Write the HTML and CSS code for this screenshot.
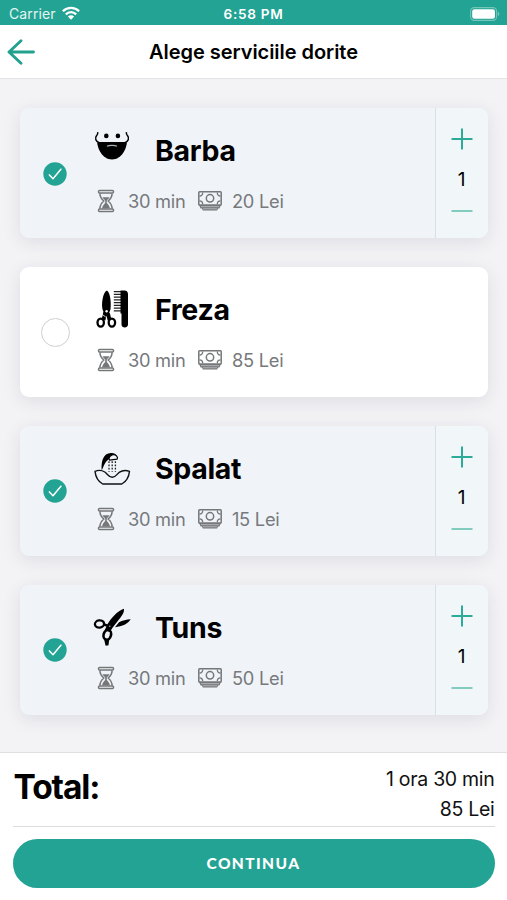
FILE: index.html
```html
<!DOCTYPE html>
<html lang="ro">
<head>
<meta charset="utf-8">
<title>Alege serviciile dorite</title>
<link rel="stylesheet" href="styles.css">
</head>
<body>
<svg class="sprite" width="0" height="0">
  <symbol id="hourglass" viewBox="0 0 18 24">
    <g fill="none" stroke="#757779" stroke-width="1.5" stroke-linejoin="round">
      <rect x="1.500" y="1.500" width="15" height="2.600" rx="1"/><rect x="1.500" y="19.900" width="15" height="2.600" rx="1"/>
      <path d="M2.900 4.200c0 4 1.200 5.500 4 7.800-2.800 2.300-4 3.800-4 7.800M15.100 4.200c0 4-1.200 5.500-4 7.800 2.800 2.300 4 3.800 4 7.800"/>
    </g>
    <path d="M5.500 8.300h7c-.7 1.300-1.900 2-2.700 3.200V14c1.200 1.300 2.800 2.700 3.200 5.500H5c.4-2.800 2-4.200 3.200-5.500v-2.500c-.8-1.200-2-1.900-2.700-3.200z" fill="#757779"/>
  </symbol>
  <symbol id="money" viewBox="0 0 24 20">
    <g fill="none" stroke="#757779">
      <rect x=".8" y=".8" width="22.400" height="13.200" rx=".8" stroke-width="1.500"/>
      <circle cx="12" cy="7.300" r="3.700" stroke-width="1.500"/>
      <path d="M1.500 5c2 0 3.200-1.300 3.200-3.500M22.500 5c-2 0-3.200-1.300-3.200-3.500M1.500 9.800c2 0 3.200 1.300 3.200 3.500M22.500 9.800c-2 0-3.200 1.300-3.200 3.500" stroke-width="1.300"/>
    </g>
    <path d="M1 14h22l-1.600 3.600H20L19.200 19.500H4.800L4 17.600H2.600z" fill="#757779"/>
    <path d="M3 15.700h18M5 17.800h14" stroke="#dfe2e6" stroke-width=".6"/>
  </symbol>
  <symbol id="beard" viewBox="0 0 40 40">
    <path d="M4.700 2.200c.3 1.600 0 2.600-1.200 3.600-1.900 2.200-.8 6.200 2.900 6.900h25.300c3.700-.7 4.800-4.700 2.900-6.900-1.200-1-1.500-2-1.200-3.600" fill="none" stroke="#000" stroke-width="1.500"/>
    <path d="M4.200 12.300h29.700c-.3 6-5 17.200-14.900 17.200S4.500 18.300 4.200 12.300z"/>
    <path d="M14 16.200c2-1.200 8-1.200 10 0" fill="none" stroke="#aeb2b6" stroke-width="1.200"/>
    <circle cx="13.300" cy="5.900" r="2.300"/><circle cx="24.900" cy="5.900" r="2.300"/>
  </symbol>
  <symbol id="comb" viewBox="0 0 40 40">
    <path d="M13.300 1.800h1c3 3 4 11 3.200 18.500l-2 5.500h-4l-2-5.500c-1.300-6 .5-16 3.800-18.500z"/>
    <path d="M12.200 23.500 10.500 31M15 24.500l1.500 6.500" stroke="#000" stroke-width="3.800"/>
    <circle cx="13.600" cy="22.300" r="1.200" fill="#fff"/>
    <path d="M8.500 25l4.300 3" stroke="#fff" stroke-width=".8"/>
    <g fill="#fff" stroke="#000" stroke-width="2.300"><ellipse cx="7.700" cy="33.600" rx="3.200" ry="4"/><ellipse cx="18.900" cy="33.600" rx="3.200" ry="4"/></g>
    <path d="M20.800 2.600h8M20.800 5.400h8M20.800 8.100h8M20.800 10.900h8M20.800 13.600h8M20.800 16.400h8M20.800 19.100h8M20.800 21.900h8" stroke="#222" stroke-width="1.200"/>
    <path d="M27.500 1.600h4c2.300 0 3.500 1.500 3.500 3.700v30.200c0 4-6.500 4-6.500 0v-11h-1z"/>
  </symbol>
  <symbol id="wash" viewBox="0 0 40 40">
    <path d="M8.700 22.500C8 14 9.800 5.200 18 5c3.500-.2 6 1.700 6.600 4.800l-8.800 1.400c-3.500 2-5 7-7.100 11.300z"/>
    <path d="M15.900 10.700c.8-3.500 5-5.500 7.800-2.600 1 1.200.8 2.500.4 3l-7.500.9z" fill="#f0f4f9" stroke="#000" stroke-width="1.200"/>
    <path d="M16 13.300v10.500M19.200 13.300v10.500M22.400 13.300v10.500" stroke="#222" stroke-width="1.300" stroke-dasharray="1.700 1.500"/>
    <path d="M2 23.300c3-1.200 7-1 9.800.7 3 2 3.700 5.200 7.500 5.200s4.500-3.200 7.300-5.100c2.600-1.700 6.500-2 9.900-.8-.6 5.400-3 10-7.700 12.700H9.700C5 33.300 2.600 28.700 2 23.300z" fill="none" stroke="#111" stroke-width="1.400" stroke-linejoin="round"/>
  </symbol>
  <symbol id="scissors" viewBox="0 0 40 40">
    <path d="M31 1.800c.3 3-1 5.500-3.300 8.500l-8 10.200-2.900 4.500-5-2 2.500-5.500c3.500-6 10-13.500 16.700-15.700z"/>
    <path d="M37.700 12.300c-2.500 4.500-8.500 7.200-15.700 7.900l4-5c3.500-1.500 7.500-2.800 11.700-2.900z"/>
    <path d="M11 17.500l5 1.600" stroke="#000" stroke-width="2.500"/>
    <ellipse cx="6.500" cy="17" rx="4.600" ry="3.600" transform="rotate(-8 6.500 17)" fill="none" stroke="#000" stroke-width="2.300"/>
    <ellipse cx="14.300" cy="27.800" rx="3.700" ry="5" transform="rotate(15 14.300 27.800)" fill="none" stroke="#000" stroke-width="2.600"/>
    <path d="M10.800 31.500c1 2.800 1 5 1.900 7.200l2.800-.5.600-5z"/>
    <circle cx="16.800" cy="19.300" r=".7" fill="#bbb"/>
  </symbol>
  <symbol id="check" viewBox="0 0 24 24">
    <circle cx="12" cy="12" r="11.700" fill="#23a393"/>
    <path d="M6.400 12.900l3.600 3.800 7.900-9.500" fill="none" stroke="#fff" stroke-width="1.500" stroke-linecap="round" stroke-linejoin="round"/>
  </symbol>
  <symbol id="plus" viewBox="0 0 22 22"><path d="M11 .5v21M.5 11h21" stroke="#2bab98" stroke-width="2"/></symbol>
  <symbol id="minus" viewBox="0 0 22 2"><path d="M.5 1h21" stroke="#83cbbf" stroke-width="2"/></symbol>
</svg>

<div class="screen">
  <div class="status">
    <div class="carrier"><span>Carrier</span>
      <svg width="18" height="14" viewBox="0 0 18 14"><g fill="none" stroke="#fff" stroke-width="2.300"><path d="M.9 5.200c4.600-4.500 11.600-4.500 16.200 0M3.800 8.300c3-2.900 7.400-2.900 10.400 0"/></g><path d="M5.900 10.600c1.800-1.700 4.400-1.700 6.200 0L9 13.700z" fill="#fff"/></svg>
    </div>
    <div class="time">6:58 PM</div>
    <svg class="battery" width="30" height="14" viewBox="0 0 30 14"><rect x=".6" y=".6" width="26" height="12.800" rx="3.600" fill="none" stroke="#74c5ba" stroke-width="1.100"/><rect x="2.200" y="2.200" width="22.800" height="9.600" rx="2.200" fill="#fff"/><path d="M27.800 4.600c2 .8 2 4 0 4.800z" fill="#74c5ba"/></svg>
  </div>
  <header class="nav">
    <svg class="back" width="28" height="26" viewBox="0 0 28 26"><path d="M14 1.700 2 13l12 11.300M2.500 13h24" fill="none" stroke="#23a08e" stroke-width="2.900" stroke-linecap="round" stroke-linejoin="round"/></svg>
    <h1>Alege serviciile dorite</h1>
  </header>

  <main class="list">
    <article class="card selected">
      <div class="mark"><svg width="24" height="24"><use href="#check"/></svg></div>
      <div class="info">
        <div class="head"><svg width="40" height="40"><use href="#beard"/></svg><h2>Barba</h2></div>
        <div class="meta"><svg class="hg" width="18" height="24"><use href="#hourglass"/></svg><span class="dur">30 min</span><svg width="24" height="20"><use href="#money"/></svg><span class="price">20 Lei</span></div>
      </div>
      <div class="qty"><svg width="22" height="22"><use href="#plus"/></svg><span>1</span><svg width="22" height="2"><use href="#minus"/></svg></div>
    </article>
    <article class="card">
      <div class="mark"><span class="ring"></span></div>
      <div class="info">
        <div class="head"><svg width="40" height="40"><use href="#comb"/></svg><h2>Freza</h2></div>
        <div class="meta"><svg class="hg" width="18" height="24"><use href="#hourglass"/></svg><span class="dur">30 min</span><svg width="24" height="20"><use href="#money"/></svg><span class="price">85 Lei</span></div>
      </div>
    </article>
    <article class="card selected">
      <div class="mark"><svg width="24" height="24"><use href="#check"/></svg></div>
      <div class="info">
        <div class="head"><svg width="40" height="40"><use href="#wash"/></svg><h2>Spalat</h2></div>
        <div class="meta"><svg class="hg" width="18" height="24"><use href="#hourglass"/></svg><span class="dur">30 min</span><svg width="24" height="20"><use href="#money"/></svg><span class="price">15 Lei</span></div>
      </div>
      <div class="qty"><svg width="22" height="22"><use href="#plus"/></svg><span>1</span><svg width="22" height="2"><use href="#minus"/></svg></div>
    </article>
    <article class="card selected">
      <div class="mark"><svg width="24" height="24"><use href="#check"/></svg></div>
      <div class="info">
        <div class="head"><svg width="40" height="40"><use href="#scissors"/></svg><h2>Tuns</h2></div>
        <div class="meta"><svg class="hg" width="18" height="24"><use href="#hourglass"/></svg><span class="dur">30 min</span><svg width="24" height="20"><use href="#money"/></svg><span class="price">50 Lei</span></div>
      </div>
      <div class="qty"><svg width="22" height="22"><use href="#plus"/></svg><span>1</span><svg width="22" height="2"><use href="#minus"/></svg></div>
    </article>
  </main>

  <footer class="summary">
    <div class="total">
      <strong>Total:</strong>
      <div class="sums"><div>1 ora 30 min</div><div>85 Lei</div></div>
    </div>
    <button class="continue">CONTINUA</button>
  </footer>
</div>
</body>
</html>
```
FILE: styles.css
```css
* { box-sizing: border-box; }
body { margin: 0; font-family: Inter, "Liberation Sans", sans-serif; color: #000; }
h1, h2 { margin: 0; }
svg { display: block; flex: none; }
.sprite { position: absolute; }
.screen { width: 507px; height: 900px; display: flex; flex-direction: column; background: #f3f3f6; overflow: hidden; }

.status { height: 25px; background: #23a393; color: #fff; display: grid; grid-template-columns: 1fr auto 1fr; align-items: center; padding: 2px 7px 0 7px; }
.carrier { display: flex; align-items: center; gap: 6px; padding-left: 2px; font-size: 14px; letter-spacing: 0.1px; color: #e3f5f2; }
.carrier svg { margin-top: -2px; }
.time { font-size: 13.6px; font-weight: 600; letter-spacing: 0.7px; }
.battery { justify-self: end; }

.nav { height: 54px; background: #fff; border-bottom: 1px solid #e4e4e7; display: grid; grid-template-columns: 48px 1fr 48px; align-items: center; }
.back { margin-left: 7px; }
.nav h1 { font-size: 20px; font-weight: 600; text-align: center; letter-spacing: -0.05px; white-space: nowrap; }

.list { flex: 1; min-height: 0; padding: 29.400px 19.500px 0 20.400px; display: flex; flex-direction: column; gap: 29.300px; }
.card { height: 129.600px; flex: none; display: flex; background: #fff; border-radius: 9px; box-shadow: 0 4px 18px rgba(40, 40, 60, 0.1); }
.selected { background: #f0f4f8; }
.mark { width: 69.500px; display: flex; align-items: center; justify-content: center; padding-top: 1px; }
.ring { width: 29px; height: 29px; border: 1.500px solid #cfcfd1; border-radius: 50%; }
.info { flex: 1; padding: 22px 0 0 3px; }
.head { display: flex; align-items: center; height: 40px; }
.head h2 { margin: 2px 0 0 22px; font-size: 28.500px; line-height: 40px; font-weight: 700; letter-spacing: -0.3px; }
.meta { display: flex; align-items: center; margin: 18.900px 0 0 4px; height: 24px; font-size: 18.300px; color: #77797c; letter-spacing: -0.25px; white-space: nowrap; }
.dur { width: 70px; margin-left: 13px; }
.price { margin-left: 10px; }
.qty { width: 53px; border-left: 1.300px solid #d9e0e5; background: #f1f6f9; border-radius: 0 9px 9px 0; display: flex; flex-direction: column; align-items: center; padding-top: 19.700px; font-size: 19px; }
.qty span { line-height: 24px; margin: 18px 0; }

.summary { height: 148px; background: #fff; border-top: 1px solid #dfdfe2; padding: 0 12.500px; }
.total { height: 73.500px; border-bottom: 1px solid #dcdcdf; display: flex; justify-content: space-between; }
.total strong { font-size: 33.500px; line-height: 40px; letter-spacing: -1.100px; margin: 14px 0 0 1px; }
.sums { padding-top: 10.500px; text-align: right; font-size: 19.500px; line-height: 30.500px; letter-spacing: -0.3px; color: #111; }
.continue { display: block; width: 100%; height: 49px; margin-top: 12px; border: 0; border-radius: 25px; background: #23a393; color: #fff; font: 900 15.500px Lato, "Open Sans", sans-serif; letter-spacing: 1.400px; }
```
